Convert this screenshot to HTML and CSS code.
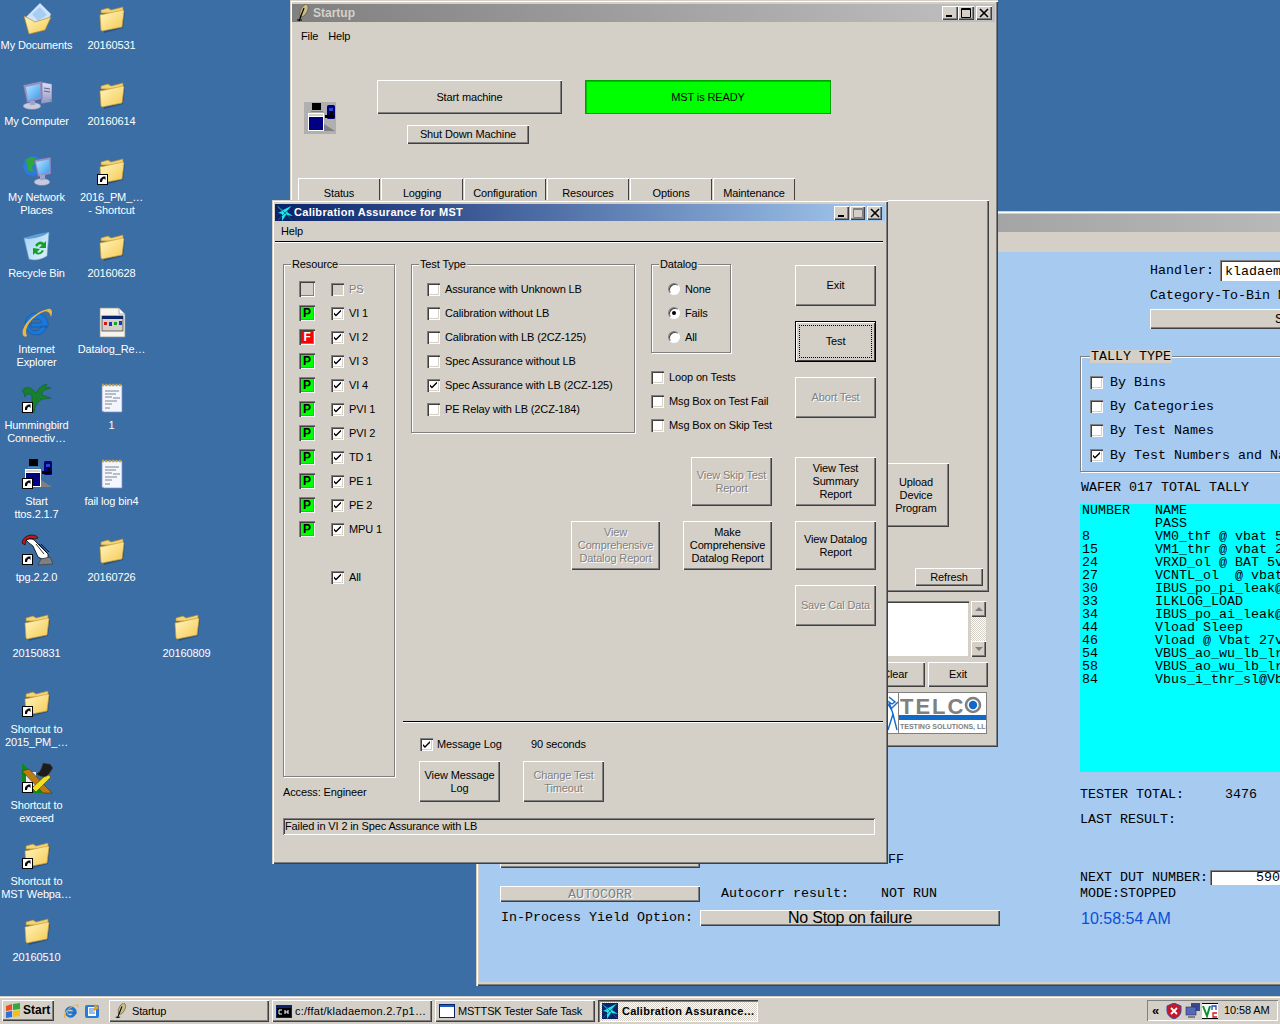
FILE: index.html
```html
<!DOCTYPE html>
<html lang="en">
<head>
<meta charset="utf-8">
<title>Desktop</title>
<link rel="stylesheet" href="styles.css">
</head>
<body>
<svg class="defs" width="0" height="0" aria-hidden="true">
  <defs>
    <linearGradient id="gFold" x1="0" y1="0" x2="1" y2="1"><stop offset="0" stop-color="#fff6c0"/><stop offset="1" stop-color="#f6c850"/></linearGradient>
    <linearGradient id="gScreen" x1="0" y1="0" x2="1" y2="1"><stop offset="0" stop-color="#b8e4ff"/><stop offset="1" stop-color="#3c9cf0"/></linearGradient>
    <linearGradient id="gCase" x1="0" y1="0" x2="0" y2="1"><stop offset="0" stop-color="#dfe2f4"/><stop offset="1" stop-color="#8f94c4"/></linearGradient>
    <linearGradient id="gBin" x1="0" y1="0" x2="1" y2="1"><stop offset="0" stop-color="#9ed2f4"/><stop offset="1" stop-color="#e2f2fc"/></linearGradient>
    <symbol id="i-folder" viewBox="0 0 32 32">
      <g transform="translate(-1 0)">
      <path d="M7 13 L29 8 L30 10 L28 26 L9 31 Z" fill="#1d3d66" opacity=".55"/>
      <path d="M6 11 L6 8 L13 6 L16 8 L28 5 L28 11 Z" fill="#f4d478" stroke="#b08c34" stroke-width=".7"/>
      <path d="M5 13 L28 8 L29 9 L27 25 L7 29 L6 28 Z" fill="url(#gFold)" stroke="#c49e3c" stroke-width=".7"/>
      </g>
    </symbol>
    <symbol id="i-short" viewBox="0 0 32 32">
      <rect x="1.5" y="20.5" width="10" height="10" fill="#fff" stroke="#000"/>
      <path d="M4 28 V26 Q4 24 6 24 H5 L7.5 22.5 L9.5 22.5 V26 L8 24.5 Q6 25 6 28 Z" fill="#000"/>
    </symbol>
    <symbol id="i-docs" viewBox="0 0 32 32">
      <path d="M5 15 L19 1 L30 12 L26 22 L14 26 Z" fill="#cfe4fa" stroke="#7a9cc8" stroke-width=".6"/>
      <path d="M11 12 L19 5 L26 13 L17 19 Z" fill="#a8cdf2"/>
      <path d="M3 14 L14 20 L30 15 L24 28 L8 32 Z" fill="url(#gFold)" stroke="#b8902c" stroke-width=".7"/>
    </symbol>
    <symbol id="i-comp" viewBox="0 0 32 32">
      <path d="M20 4 L31 6 V24 L20 26 Z" fill="url(#gCase)" stroke="#5c6298" stroke-width=".6"/>
      <path d="M23 10 L29 11 M23 13 L29 14" stroke="#5c6298"/>
      <circle cx="29" cy="22" r=".8" fill="#20d020"/>
      <path d="M2 7 L21 3 V21 L6 25 Z" fill="#8f94c4" stroke="#5c6298" stroke-width=".6"/>
      <path d="M5 9 L19 6 V19 L7 22 Z" fill="url(#gScreen)"/>
      <ellipse cx="11" cy="28" rx="9" ry="3.5" fill="#c8cae0" stroke="#70749c" stroke-width=".5"/>
      <rect x="9" y="23" width="5" height="4" fill="#a0a4c8"/>
    </symbol>
    <symbol id="i-net" viewBox="0 0 32 32">
      <circle cx="12" cy="12" r="10" fill="#2e7ad8"/>
      <path d="M5 6 Q9 2 14 4 L16 9 L11 12 L12 18 L7 16 Z" fill="#2ea838"/>
      <path d="M13 6 L30 3 V20 L17 23 Z" fill="#8f94c4" stroke="#5c6298" stroke-width=".6"/>
      <path d="M15 8 L28 5.5 V18 L18 20.5 Z" fill="url(#gScreen)"/>
      <ellipse cx="21" cy="28" rx="8" ry="3.5" fill="#c8cae0" stroke="#70749c" stroke-width=".5"/>
      <rect x="19" y="21" width="5" height="5" fill="#a0a4c8"/>
    </symbol>
    <symbol id="i-bin" viewBox="0 0 32 32">
      <path d="M3 8 Q14 10 28 2 L26 26 Q16 32 8 29 Z" fill="url(#gBin)" stroke="#6ea4cc" stroke-width=".6"/>
      <path d="M3 8 Q14 4 28 2 Q20 9 3 8 Z" fill="#5ea0d4"/>
      <path d="M14 15 Q19 9 23 13 L25 11 V18 L18 18 L21 15 Q18 13 16 17 Z M23 21 Q18 27 14 23 L12 25 V18 L19 19 L16 22 Q19 24 21 20 Z" fill="#14a028"/>
    </symbol>
    <symbol id="i-ie" viewBox="0 0 32 32">
      <path d="M15 7 A11 11 0 1 0 26 20 H20 A6 6 0 1 1 15 13 A6 6 0 0 1 21 17 H10 V21 H27 A12 12 0 0 0 15 7 Z" fill="#1c78d8" stroke="#0c4c9c" stroke-width=".5"/>
      <path d="M2 29 C-1 22 12 6 27 3 C31 2 32 6 30 11 C29 6 26 4 22 6 C11 11 2 22 6 30 C5 31 3 31 2 29 Z" fill="#eeb63c"/>
    </symbol>
    <symbol id="i-page" viewBox="0 0 32 32">
      <path d="M4 2 H23 L29 8 V31 H4 Z" fill="#f6f4ec" stroke="#8c8c8c" stroke-width=".7"/>
      <path d="M23 2 V8 H29 Z" fill="#fff" stroke="#8c8c8c" stroke-width=".7"/>
      <rect x="6" y="10" width="21" height="15" fill="#d4d0c8" stroke="#333" stroke-width=".7"/>
      <rect x="6" y="10" width="21" height="3" fill="#0a246a"/>
      <rect x="8" y="16" width="3" height="3" fill="#d01818"/><rect x="13" y="16" width="3" height="4" fill="#1838c8"/><rect x="18" y="16" width="3" height="3" fill="#18a030"/><rect x="23" y="15" width="3" height="4" fill="#1838c8"/>
    </symbol>
    <symbol id="i-note" viewBox="0 0 32 32">
      <path d="M6 3 H26 V30 H8 L6 29 Z" fill="#f2f6ff" stroke="#8a90c0" stroke-width=".7"/>
      <path d="M6 3 H26" stroke="#c0a040" stroke-width="2.5" stroke-dasharray="2 1.4"/>
      <path d="M9 9 H23 M9 12 H20 M9 15 H16 M17 16 H24 M9 19 H21 M9 22 H16 M9 26 H14" stroke="#808488" stroke-width="1"/>
    </symbol>
    <symbol id="i-bird" viewBox="0 0 32 32">
      <path d="M1 9 Q4 4 9 6 Q13 8 15 11 Q19 3 26 2 L24 5 L30 6 L24 8 Q20 10 21 13 L30 16 L22 17 Q16 19 14 26 L13 31 Q10 22 11 14 Q7 9 4 15 L3 11 Z" fill="#18802c" stroke="#0e5a1e" stroke-width=".5"/>
    </symbol>
    <symbol id="i-ttos" viewBox="0 0 32 32">
      <rect x="8" y="1" width="9" height="7" fill="#000"/><path d="M7 9 H19 V10 H7 Z" fill="#808080"/>
      <rect x="4" y="11" width="16" height="18" fill="#fff"/><rect x="5" y="15" width="14" height="13" fill="#000080"/><rect x="5" y="12" width="14" height="2" fill="#d4d0c8"/>
      <path d="M20 29 V22 L31 29 Z" fill="#808080"/>
      <rect x="23" y="3" width="8" height="14" rx="1.5" fill="#000080"/><rect x="25" y="6" width="4" height="3" fill="#2848c8"/><rect x="26" y="9" width="3" height="5" fill="#000"/><rect x="21" y="13" width="10" height="3" fill="#000"/>
    </symbol>
    <symbol id="i-tpg" viewBox="0 0 32 32">
      <path d="M1 9 Q2 2 10 1 Q16 1 17 4 L14 5 Q10 3 5 6 L4 11 Z" fill="#c01818" stroke="#000" stroke-width=".6"/>
      <path d="M5 6 Q12 3 15 8 L27 20 L27 24 L21 25 L17 23 L12 12 L8 9 Z" fill="#fff" stroke="#000" stroke-width=".8"/>
      <path d="M15 10 L23 20 M18 10 L26 19 M20 10 L28 18" stroke="#000" stroke-width=".8"/>
      <path d="M17 31 L20 25 L29 23 L32 30 Z" fill="#808080" stroke="#333" stroke-width=".6"/>
    </symbol>
    <symbol id="i-exc" viewBox="0 0 32 32">
      <path d="M1 1 L1 31 H31 Z" fill="#0b8a1e"/>
      <path d="M5 10 H15 V24 H5 Z" fill="#e8e8f0"/>
      <path d="M1 9 L8 7 L31 31 H22 Z" fill="#b87c14" stroke="#3a2a04" stroke-width=".5"/>
      <path d="M11 26 L26 12 L30 15 L15 30 Z" fill="#f0e020" stroke="#3a2a04" stroke-width=".5"/>
      <path d="M15 12 Q19 10 20 7 L22 1 L29 2 L32 6 L28 12 Q24 18 15 12 Z" fill="#1c1c1c" stroke="#555" stroke-width=".5"/>
    </symbol>
    <symbol id="i-cal" viewBox="0 0 16 16">
      <rect width="16" height="16" fill="#0a246a"/>
      <path d="M0 1 L6 5 L14 1 L10 7 L16 11 L9 10 L5 16 L5 9 L1 8 L5 6 Z" fill="#22e0e8"/>
      <path d="M1 15 L15 1 M1 1 L15 15" stroke="#0a6a7a" stroke-width=".8"/>
    </symbol>
    <symbol id="i-feather" viewBox="0 0 16 18">
      <path d="M11 0 Q15 2 12 8 Q10 12 7 13 L5 12 Q4 7 7 3 Q9 1 11 0 Z" fill="#c8bc88" stroke="#5a5030" stroke-width=".7"/>
      <path d="M9 4 L4 17" stroke="#000" stroke-width="1.2"/>
      <path d="M2 16 H7" stroke="#000"/>
    </symbol>
    <symbol id="i-min" viewBox="0 0 16 14"><rect x="4" y="9" width="6" height="2" fill="#000"/></symbol>
    <symbol id="i-max" viewBox="0 0 16 14"><path d="M3.5 2.5 H12.5 V11.5 H3.5 Z M3.5 3.5 H12.5" fill="none" stroke="currentColor"/></symbol>
    <symbol id="i-close" viewBox="0 0 16 14"><path d="M4 3 L12 11 M12 3 L4 11" stroke="#000" stroke-width="1.6"/></symbol>
  </defs>
</svg>

<main class="desktop">
  <section class="icons">
    <div class="dicon"><svg class="ico"><use href="#i-docs"/></svg><span>My Documents</span></div>
    <div class="dicon"><svg class="ico"><use href="#i-comp"/></svg><span>My Computer</span></div>
    <div class="dicon"><svg class="ico"><use href="#i-net"/></svg><span>My Network<br>Places</span></div>
    <div class="dicon"><svg class="ico"><use href="#i-bin"/></svg><span>Recycle Bin</span></div>
    <div class="dicon"><svg class="ico"><use href="#i-ie"/></svg><span>Internet<br>Explorer</span></div>
    <div class="dicon"><svg class="ico"><use href="#i-bird"/><use href="#i-short"/></svg><span>Hummingbird<br>Connectiv…</span></div>
    <div class="dicon"><svg class="ico"><use href="#i-ttos"/><use href="#i-short"/></svg><span>Start<br>ttos.2.1.7</span></div>
    <div class="dicon"><svg class="ico"><use href="#i-tpg"/><use href="#i-short"/></svg><span>tpg.2.2.0</span></div>
    <div class="dicon"><svg class="ico"><use href="#i-folder"/></svg><span>20150831</span></div>
    <div class="dicon"><svg class="ico"><use href="#i-folder"/><use href="#i-short"/></svg><span>Shortcut to<br>2015_PM_…</span></div>
    <div class="dicon"><svg class="ico"><use href="#i-exc"/><use href="#i-short"/></svg><span>Shortcut to<br>exceed</span></div>
    <div class="dicon"><svg class="ico"><use href="#i-folder"/><use href="#i-short"/></svg><span>Shortcut to<br>MST Webpa…</span></div>
    <div class="dicon"><svg class="ico"><use href="#i-folder"/></svg><span>20160510</span></div>

    <div class="dicon"><svg class="ico"><use href="#i-folder"/></svg><span>20160531</span></div>
    <div class="dicon"><svg class="ico"><use href="#i-folder"/></svg><span>20160614</span></div>
    <div class="dicon"><svg class="ico"><use href="#i-folder"/><use href="#i-short"/></svg><span>2016_PM_…<br>- Shortcut</span></div>
    <div class="dicon"><svg class="ico"><use href="#i-folder"/></svg><span>20160628</span></div>
    <div class="dicon"><svg class="ico"><use href="#i-page"/></svg><span>Datalog_Re…</span></div>
    <div class="dicon"><svg class="ico"><use href="#i-note"/></svg><span>1</span></div>
    <div class="dicon"><svg class="ico"><use href="#i-note"/></svg><span>fail log bin4</span></div>
    <div class="dicon"><svg class="ico"><use href="#i-folder"/></svg><span>20160726</span></div>
    <div class="dicon col3"><svg class="ico"><use href="#i-folder"/></svg><span>20160809</span></div>
  </section>

  <!-- MSTTSK Tester Safe Task window -->
  <section class="win mst">
    <header class="title inactive mst-title"></header>
    <div class="mst-menu"></div>
    <div class="mst-body mono">
      <div class="mst-left">
        <div class="mst-row r1"><span class="tkbtn wide"></span><span class="ff">FF</span></div>
        <div class="mst-row r2"><span class="tkbtn wide dis">AUTOCORR</span><span class="ac-l">Autocorr result:</span><span class="ac-v">NOT RUN</span></div>
        <div class="mst-row r3"><span class="yl">In-Process Yield Option:</span><span class="tkbtn yield">No Stop on failure</span></div>
      </div>
      <div class="mst-right">
        <div class="handler"><span>Handler:</span><span class="entry">kladaemon.2.7</span></div>
        <div class="catbin">Category-To-Bin Map</div>
        <div class="tkbtn catbtn">Select</div>
        <div class="group tally">
          <span class="legend">TALLY TYPE</span>
          <div class="tally-row"><span class="cb"></span>By Bins</div>
          <div class="tally-row"><span class="cb"></span>By Categories</div>
          <div class="tally-row"><span class="cb"></span>By Test Names</div>
          <div class="tally-row"><span class="cb on"></span>By Test Numbers and Names</div>
        </div>
        <div class="wafer">WAFER 017 TOTAL TALLY</div>
        <div class="cyan">
          <span>NUMBER</span><span>NAME</span>
          <span></span><span>PASS</span>
          <span>8</span><span>VM0_thf @ vbat 5v</span>
          <span>15</span><span>VM1_thr @ vbat 27v</span>
          <span>24</span><span>VRXD_ol @ BAT 5v</span>
          <span>27</span><span>VCNTL_ol  @ vbat 5v</span>
          <span>30</span><span>IBUS_po_pi_leak@</span>
          <span>33</span><span>ILKLOG_LOAD</span>
          <span>34</span><span>IBUS_po_ai_leak@</span>
          <span>44</span><span>Vload Sleep</span>
          <span>46</span><span>Vload @ Vbat 27v</span>
          <span>54</span><span>VBUS_ao_wu_lb_lr</span>
          <span>58</span><span>VBUS_ao_wu_lb_lr</span>
          <span>84</span><span>Vbus_i_thr_sl@Vbat</span>
        </div>
        <div class="tester"><span>TESTER TOTAL:</span><span>3476</span></div>
        <div class="last">LAST RESULT:</div>
        <div class="next"><span>NEXT DUT NUMBER:</span><span class="entry dut">590</span></div>
        <div class="mode">MODE:STOPPED</div>
        <div class="clock">10:58:54 AM</div>
      </div>
    </div>
  </section>

  <!-- Startup window -->
  <section class="win startup">
    <header class="title inactive st-title">
      <svg class="tico"><use href="#i-feather"/></svg><span class="ttext">Startup</span>
      <span class="wbtns"><span class="wb"><svg><use href="#i-min"/></svg></span><span class="wb"><svg><use href="#i-max"/></svg></span><span class="wb gap"><svg><use href="#i-close"/></svg></span></span>
    </header>
    <nav class="st-menu"><span>File</span><span>Help</span></nav>
    <div class="st-top">
      <svg class="st-ico"><use href="#i-ttos"/></svg>
      <div class="st-btns">
        <div class="tkbtn start">Start machine</div>
        <div class="tkbtn shut">Shut Down Machine</div>
      </div>
      <div class="ready">MST is READY</div>
    </div>
    <div class="tabs">
      <span class="tab">Status</span><span class="tab">Logging</span><span class="tab">Configuration</span><span class="tab">Resources</span><span class="tab">Options</span><span class="tab">Maintenance</span>
    </div>
    <div class="panel">
      <div class="tkbtn upload">Upload<br>Device<br>Program</div>
      <div class="tkbtn refresh">Refresh</div>
    </div>
    <div class="logrow">
      <div class="logbox"></div>
      <div class="sbar"><span class="sarrow up"></span><span class="strack"></span><span class="sarrow down"></span></div>
    </div>
    <div class="st-bottom">
      <div class="tkbtn clear">Clear</div>
      <div class="tkbtn st-exit">Exit</div>
    </div>
    <div class="logo-row">
      <svg class="logo" viewBox="0 0 130 42" role="img" aria-label="Telco Testing Solutions">
        <rect x=".5" y=".5" width="129" height="41" fill="#fff" stroke="#808080"/>
        <path d="M32 5 L38 10 L35 12 L32 10 L36 22 L40 38 M36 22 L31 38 M29 9 L34 17 L41 10" fill="none" stroke="#1068c8" stroke-width="1.4"/>
        <line x1="41.5" y1="1" x2="41.5" y2="41" stroke="#808080"/>
        <text x="43" y="22" class="logo-t">TELC</text>
        <circle cx="116" cy="13" r="7" fill="#fff" stroke="#808080" stroke-width="2.6"/>
        <circle cx="116" cy="13" r="4.2" fill="#1068c8"/>
        <rect x="42" y="23" width="87" height="5" fill="#1068c8"/>
        <text x="43" y="37" class="logo-s">TESTING SOLUTIONS, LLC</text>
      </svg>
    </div>
  </section>

  <!-- Calibration dialog -->
  <section class="win cal">
    <header class="title active cal-title">
      <svg class="cico"><use href="#i-cal"/></svg><span class="ttext">Calibration Assurance for MST</span>
      <span class="wbtns"><span class="wb s"><svg><use href="#i-min"/></svg></span><span class="wb s dim"><svg><use href="#i-max"/></svg></span><span class="wb s gap"><svg><use href="#i-close"/></svg></span></span>
    </header>
    <nav class="cal-menu"><span>Help</span></nav>
    <div class="rule"></div>
    <div class="cal-body">
      <div class="cal-main">
        <div class="cal-left">
          <div class="group resource">
            <span class="legend">Resource</span>
            <div class="res-row"><span class="led"></span><span class="cb off"></span><span class="lbl dis">PS</span></div>
            <div class="res-row"><span class="led p">P</span><span class="cb on"></span><span class="lbl">VI 1</span></div>
            <div class="res-row"><span class="led f">F</span><span class="cb on"></span><span class="lbl">VI 2</span></div>
            <div class="res-row"><span class="led p">P</span><span class="cb on"></span><span class="lbl">VI 3</span></div>
            <div class="res-row"><span class="led p">P</span><span class="cb on"></span><span class="lbl">VI 4</span></div>
            <div class="res-row"><span class="led p">P</span><span class="cb on"></span><span class="lbl">PVI 1</span></div>
            <div class="res-row"><span class="led p">P</span><span class="cb on"></span><span class="lbl">PVI 2</span></div>
            <div class="res-row"><span class="led p">P</span><span class="cb on"></span><span class="lbl">TD 1</span></div>
            <div class="res-row"><span class="led p">P</span><span class="cb on"></span><span class="lbl">PE 1</span></div>
            <div class="res-row"><span class="led p">P</span><span class="cb on"></span><span class="lbl">PE 2</span></div>
            <div class="res-row"><span class="led p">P</span><span class="cb on"></span><span class="lbl">MPU 1</span></div>
            <div class="res-row all"><span class="led none"></span><span class="cb on"></span><span class="lbl">All</span></div>
          </div>
          <div class="access">Access: Engineer</div>
        </div>
        <div class="cal-right">
          <div class="row-a">
            <div class="group testtype">
              <span class="legend">Test Type</span>
              <div class="opt"><span class="cb"></span>Assurance with Unknown LB</div>
              <div class="opt"><span class="cb"></span>Calibration without LB</div>
              <div class="opt"><span class="cb"></span>Calibration with LB (2CZ-125)</div>
              <div class="opt"><span class="cb"></span>Spec Assurance without LB</div>
              <div class="opt"><span class="cb on"></span>Spec Assurance with LB (2CZ-125)</div>
              <div class="opt"><span class="cb"></span>PE Relay with LB (2CZ-184)</div>
            </div>
            <div class="dl-col">
              <div class="group datalog">
                <span class="legend">Datalog</span>
                <div class="opt r"><span class="radio"></span>None</div>
                <div class="opt r"><span class="radio on"></span>Fails</div>
                <div class="opt r"><span class="radio"></span>All</div>
              </div>
              <div class="dl-checks">
                <div class="opt"><span class="cb"></span>Loop on Tests</div>
                <div class="opt"><span class="cb"></span>Msg Box on Test Fail</div>
                <div class="opt"><span class="cb"></span>Msg Box on Skip Test</div>
              </div>
            </div>
            <div class="btn-col">
              <div class="tkbtn b41">Exit</div>
              <div class="tkbtn b41 default">Test</div>
              <div class="tkbtn b41 dis">Abort Test</div>
            </div>
          </div>
          <div class="row-btn">
            <div class="tkbtn b49 dis">View Skip Test<br>Report</div>
            <div class="tkbtn b49">View Test<br>Summary<br>Report</div>
          </div>
          <div class="row-btn">
            <div class="tkbtn b49 w89 dis">View<br>Comprehensive<br>Datalog Report</div>
            <div class="tkbtn b49 w89">Make<br>Comprehensive<br>Datalog Report</div>
            <div class="tkbtn b49">View Datalog<br>Report</div>
          </div>
          <div class="row-btn">
            <div class="tkbtn b41 dis">Save Cal Data</div>
          </div>
          <div class="sep"></div>
          <div class="msg-row">
            <span class="opt msglog"><span class="cb on"></span>Message Log</span>
            <span>90 seconds</span>
          </div>
          <div class="msg-btns">
            <div class="tkbtn b41">View Message<br>Log</div>
            <div class="tkbtn b41 dis">Change Test<br>Timeout</div>
          </div>
        </div>
      </div>
      <div class="status">Failed in VI 2 in Spec Assurance with LB</div>
    </div>
  </section>
</main>

<footer class="taskbar">
  <div class="startbtn">
    <svg class="flag" viewBox="0 0 16 16"><path d="M1 3 L7 1 V7 L1 8 Z" fill="#e8501c"/><path d="M8 1 L15 0 V6 L8 7 Z" fill="#34a838"/><path d="M1 9 L7 8 V14 L1 15 Z" fill="#2c70d8"/><path d="M8 8 L15 7 V13 L8 14 Z" fill="#f4c018"/></svg>
    <b>Start</b>
  </div>
  <div class="quick">
    <svg class="q"><use href="#i-ie"/></svg>
    <svg class="q2" viewBox="0 0 16 16"><rect x="1" y="2" width="14" height="13" rx="2" fill="#2c7ad8"/><rect x="4" y="4" width="8" height="9" fill="#fff"/><path d="M5 6 H11 M5 8 H9 M5 10 H11" stroke="#2c7ad8"/><path d="M11 1 L15 5 L9 9 Z" fill="#e8a020"/></svg>
  </div>
  <div class="tasks">
    <div class="task"><svg class="tsk-i" viewBox="0 0 16 18"><use href="#i-feather"/></svg>Startup</div>
    <div class="task cmd"><svg class="tsk-i" viewBox="0 0 16 16"><rect y="2" width="16" height="13" fill="#0a246a"/><rect x="1" y="5" width="14" height="9" fill="#000"/><path d="M3 7 H6 M3 7 V11 H6 M9 7 V11 M12 7 V11 M9 9 H12" stroke="#fff"/></svg>c:/ffat/kladaemon.2.7p1…</div>
    <div class="task"><svg class="tsk-i" viewBox="0 0 16 16"><rect x=".5" y="1.5" width="15" height="13" fill="#fff" stroke="#0a246a"/><rect x="1" y="2" width="14" height="2" fill="#1c5cc8"/></svg>MSTTSK Tester Safe Task</div>
    <div class="task pressed"><svg class="tsk-i"><use href="#i-cal"/></svg>Calibration Assurance…</div>
  </div>
  <div class="tray">
    <span class="chev">«</span>
    <svg class="tr" viewBox="0 0 16 16"><path d="M8 0 L15 3 V8 Q15 13 8 16 Q1 13 1 8 V3 Z" fill="#c81828" stroke="#3848a8"/><path d="M5 5 L11 11 M11 5 L5 11" stroke="#fff" stroke-width="1.8"/></svg>
    <svg class="tr" viewBox="0 0 16 16"><rect x="7" y="0" width="9" height="8" fill="#384890"/><rect x="2" y="4" width="10" height="8" fill="#5868b8" stroke="#202860" stroke-width=".6"/><rect x="4" y="13" width="7" height="2" fill="#808080"/></svg>
    <svg class="tr" viewBox="0 0 16 16"><rect width="16" height="16" fill="#fff"/><rect width="16" height="1" fill="#000"/><rect y="15" width="16" height="1" fill="#000"/><path d="M1 3 L5 13 L8 3" fill="none" stroke="#109030" stroke-width="2"/><path d="M10 7 V3 H14 V7" fill="none" stroke="#2048d0" stroke-width="1.3"/><path d="M15 10 H11 V14 H15" fill="none" stroke="#d01818" stroke-width="1.3"/></svg>
    <span class="time">10:58 AM</span>
  </div>
</footer>
</body>
</html>
```

FILE: styles.css
```css
* { box-sizing: border-box; }
html, body { margin: 0; height: 100%; }
body {
  width: 1280px; height: 1024px; overflow: hidden;
  display: flex; flex-direction: column;
  background: #3a6ea5; color: #000;
  font: 11px/13px "Liberation Sans", Arial, sans-serif;
  letter-spacing: -.13px;
}
.defs { position: absolute; }
.desktop { position: relative; height: 996px; flex: none; overflow: hidden; }

/* desktop icons */
.icons {
  display: grid; grid-auto-flow: column;
  grid-template-columns: repeat(3, 75px);
  grid-template-rows: repeat(13, 76px);
  margin-left: -1px; padding-top: 2px;
}
.dicon { display: flex; flex-direction: column; align-items: center; color: #fff; text-align: center; white-space: nowrap; }
.dicon span { margin-top: 5px; }
.ico { width: 32px; height: 32px; display: block; }
.col3 { grid-column: 3; grid-row: 9; }

/* windows */
.win { position: absolute; background: #d4d0c8; box-shadow: inset 1px 1px #d4d0c8, inset 2px 2px #fff, inset -1px -1px #404040, inset -2px -2px #808080; }
.title { display: flex; align-items: center; color: #d4d0c8; font-weight: bold; letter-spacing: .3px; }
.inactive { background: linear-gradient(90deg, #808080, #c0c0c0); }
.active { background: linear-gradient(90deg, #0a246a, #a6caf0); color: #fff; }
.ttext { white-space: nowrap; }
.wbtns { margin-left: auto; display: flex; }
.wb { width: 16px; height: 14px; display: block; background: #d4d0c8; color: #000; box-shadow: inset 1px 1px #fff, inset -1px -1px #404040, inset -2px -2px #808080; }
.wb svg { width: 16px; height: 14px; display: block; }
.wb.gap { margin-left: 2px; }
.wb.s { width: 15px; margin-left: 1px; }
.wb.s.gap { margin-left: 2px; }
.wb.dim { color: #808080; }

/* tk style buttons */
.tkbtn {
  display: flex; align-items: center; justify-content: center; text-align: center; flex: none;
  background: #d4d0c8; line-height: 13px;
  box-shadow: inset 1px 1px #fff, inset -1px -1px #404040, inset -2px -2px #808080;
}
.tkbtn.dis, .lbl.dis { color: #808080; text-shadow: 1px 1px #fff; }
.b41 { width: 81px; height: 41px; }
.b49 { width: 81px; height: 49px; }
.w89 { width: 89px; }
.default { position: relative; box-shadow: inset 0 0 0 1px #000, inset 2px 2px #fff, inset -2px -2px #404040; }
.default::after { content: ""; position: absolute; inset: 4px; border: 1px dotted #000; }

/* check/radio */
.cb { display: block; position: relative; width: 13px; height: 13px; flex: none; background: #fff; box-shadow: inset 1px 1px #808080, inset 2px 2px #404040, inset -1px -1px #fff, inset -2px -2px #d4d0c8; }
.cb.on::after { content: ""; position: absolute; inset: 2px; background: #000; clip-path: polygon(11% 44%, 33% 66%, 89% 11%, 89% 33%, 33% 89%, 11% 66%); }
.cb.off { background: #d4d0c8; }
.radio { display: block; position: relative; width: 12px; height: 12px; flex: none; border-radius: 50%; background: #fff; border: 1px solid; border-color: #808080 #fff #fff #808080; box-shadow: inset 1px 1px #404040; }
.radio.on::after { content: ""; position: absolute; left: 3px; top: 3px; width: 4px; height: 4px; border-radius: 50%; background: #000; }

/* group box */
.group { position: relative; border: 1px solid #808080; box-shadow: inset 1px 1px #fff, 1px 1px #fff; }
.legend { position: absolute; top: -7px; left: 7px; padding: 0 1px; background: #d4d0c8; white-space: nowrap; }
.opt { display: flex; align-items: center; gap: 5px; height: 24px; white-space: nowrap; }

/* Startup */
.startup { left: 290px; top: 0; width: 708px; height: 747px; padding: 4px 3px 0 2px; z-index: 2; }
.st-title { height: 18px; padding: 0 3px 0 2px; font-size: 12px; letter-spacing: 0; }
.tico { width: 16px; height: 18px; flex: none; margin: 0 2px 0 1px; }
.st-menu { display: flex; gap: 10px; height: 28px; padding-left: 9px; align-items: center; }
.st-top { display: flex; margin-top: 30px; padding-left: 12px; }
.st-ico { width: 32px; height: 32px; margin-top: 22px; background: #b0b0b0; flex: none; }
.st-btns { margin-left: 41px; width: 185px; }
.start { width: 185px; height: 34px; }
.shut { width: 122px; height: 19px; margin: 11px 0 0 30px; }
.ready { margin-left: 23px; width: 246px; height: 34px; display: flex; align-items: center; justify-content: center; background: #00ff00; box-shadow: inset 1px 1px #00a000, inset -1px -1px #00a000, inset 2px 2px #00c000; }
.tabs { display: flex; gap: 1px; margin: 34px 0 0 6px; height: 22px; }
.tab { width: 82px; height: 30px; padding-top: 9px; text-align: center; background: #d4d0c8; box-shadow: inset 1px 1px #fff, inset -1px 0 #404040; }
.panel { position: relative; display: flex; flex-direction: column; align-items: flex-end; margin-left: 6px; width: 691px; height: 392px; background: #d4d0c8; padding-top: 263px; box-shadow: inset 1px 1px #fff, inset -1px -1px #404040, inset -2px -2px #808080; }
.upload { width: 66px; height: 64px; margin-right: 40px; }
.refresh { width: 68px; height: 18px; margin: 41px 6px 0 0; }
.logrow { display: flex; justify-content: flex-end; gap: 2px; margin: 9px 9px 0 0; height: 56px; }
.logbox { width: 300px; background: #fff; box-shadow: inset 1px 1px #808080, inset 2px 2px #404040, inset -1px -1px #d4d0c8; }
.sbar { width: 15px; display: flex; flex-direction: column; }
.sarrow { height: 16px; flex: none; position: relative; background: #d4d0c8; box-shadow: inset 1px 1px #fff, inset -1px -1px #404040, inset -2px -2px #808080; }
.sarrow::after { content: ""; position: absolute; left: 4px; top: 6px; border: 4px solid transparent; border-top: 0; border-bottom: 4px solid #808080; }
.sarrow.down::after { border-bottom: 0; border-top: 4px solid #808080; }
.strack { flex: 1; background: repeating-conic-gradient(#fff 0 25%, #d4d0c8 0 50%) 0 0 / 2px 2px; }
.st-bottom { display: flex; justify-content: flex-end; gap: 3px; margin: 5px 7px 0 0; }
.clear { width: 60px; height: 25px; }
.st-exit { width: 60px; height: 25px; }
.logo-row { display: flex; justify-content: flex-end; margin: 5px 8px 0 0; }
.logo { width: 130px; height: 42px; display: block; }
.logo-t { font: bold 22px "Liberation Sans", sans-serif; letter-spacing: 2px; fill: #808080; }
.logo-s { font: bold 7px "Liberation Sans", sans-serif; letter-spacing: 0; fill: #808080; }

/* Calibration dialog */
.cal { left: 272px; top: 200px; width: 616px; height: 664px; padding: 4px 3px 0; z-index: 3; }
.cal-title { height: 17px; padding-right: 3px; }
.cico { width: 16px; height: 16px; flex: none; margin: 0 1px 0 2px; }
.cal-menu { height: 20px; padding-left: 6px; display: flex; align-items: center; }
.rule { height: 2px; width: 608px; border-top: 1px solid #000; border-bottom: 1px solid #fff; }
.cal-body { padding: 21px 0 0 8px; }
.cal-main { display: flex; }
.cal-left { width: 112px; flex: none; }
.resource { height: 513px; padding: 12px 0 0 15px; }
.res-row { display: flex; align-items: center; height: 24px; white-space: nowrap; }
.res-row.all { margin-top: 24px; }
.led { width: 16px; height: 16px; flex: none; margin-right: 16px; display: flex; align-items: center; justify-content: center; font-weight: bold; font-size: 12px; box-shadow: inset 1px 1px #808080, inset 2px 2px #404040, inset -1px -1px #fff, inset -2px -2px #808080; }
.led.p { background: #00ff00; color: #000; }
.led.f { background: #ff0000; color: #fff; }
.led.none { visibility: hidden; }
.lbl { margin-left: 5px; }
.access { margin-top: 9px; }
.cal-right { margin-left: 8px; width: 480px; flex: none; }
.row-a { display: flex; padding-left: 8px; height: 169px; }
.testtype { width: 224px; height: 169px; padding: 12px 0 0 15px; flex: none; }
.dl-col { width: 128px; margin-left: 16px; flex: none; white-space: nowrap; }
.datalog { width: 80px; height: 89px; padding: 12px 0 0 16px; }
.dl-checks { margin-top: 12px; }
.btn-col { margin-left: 16px; padding-top: 1px; display: flex; flex-direction: column; gap: 15px; }
.row-btn { display: flex; justify-content: flex-end; gap: 23px; padding-right: 7px; margin-top: 15px; }
.row-a + .row-btn { margin-top: 24px; }
.sep { margin-top: 95px; height: 2px; border-top: 1px solid #000; border-bottom: 1px solid #fff; }
.msg-row { display: flex; align-items: center; height: 13px; margin-top: 15px; padding-left: 17px; }
.msglog { width: 111px; height: 13px; gap: 4px; }
.msg-btns { display: flex; gap: 23px; margin-top: 10px; padding-left: 16px; }
.status { margin-top: 16px; width: 592px; height: 17px; padding: 1px 2px; line-height: 14px; box-shadow: inset 1px 1px #808080, inset -1px -1px #fff, inset 2px 2px #404040, inset -2px -2px #d4d0c8; white-space: nowrap; }

/* MSTTSK */
.mst { left: 476px; top: 211px; width: 920px; height: 775px; padding: 3px 0 0 3px; }
.mst-title { height: 18px; }
.mst-menu { height: 20px; }
.mst-body { display: flex; height: 730px; background: #a6caf0; }
.mono { font: 13.33px/13px "Liberation Mono", "Courier New", monospace; letter-spacing: 0; }
.mst-left { width: 601px; flex: none; display: flex; flex-direction: column; justify-content: flex-end; padding: 0 0 56px 21px; white-space: nowrap; }
.mst-row { display: flex; align-items: center; }
.r1 { height: 18px; }
.wide { width: 200px; height: 100%; }
.ff { margin-left: 188px; }
.r2 { height: 16px; margin-top: 18px; }
.ac-l { margin-left: 21px; width: 160px; padding-bottom: 1px; }
.ac-v { padding-bottom: 1px; }
.r3 { height: 16px; margin-top: 8px; }
.yl { margin-left: 1px; width: 199px; padding-bottom: 2px; }
.yield { width: 300px; height: 16px; font: 16px/16px "Liberation Sans", sans-serif; letter-spacing: -.22px; }
.mst-right { flex: 1; white-space: nowrap; padding-top: 8px; }
.handler { display: flex; align-items: center; padding-left: 70px; gap: 6px; height: 21px; }
.entry { display: block; background: #fff; box-shadow: inset 1px 1px #808080, inset 2px 2px #404040, inset -1px -1px #fff; }
.handler .entry { width: 120px; height: 21px; padding: 5px 0 0 5px; }
.catbin { padding-left: 70px; margin-top: 8px; }
.catbtn { margin: 7px 0 0 70px; width: 298px; height: 20px; }
.tally { margin-top: 27px; height: 116px; padding: 13px 0 0 9px; }
.tally .legend { left: 9px; }
.tally-row { display: flex; align-items: center; gap: 7px; height: 24.4px; }
.wafer { margin: 9px 0 0 1px; }
.cyan { margin-top: 10px; height: 268px; background: #00ffff; display: grid; grid-template-columns: 73px 1fr; grid-auto-rows: 13px; padding-left: 2px; }
.cyan span { white-space: pre; }
.tester { display: flex; margin-top: 16px; gap: 41px; }
.tester span:first-child { width: 104px; }
.last { margin-top: 12px; }
.next { display: flex; align-items: center; margin-top: 44px; height: 15px; gap: 3px; }
.dut { width: 100px; height: 15px; padding: 1px 0 0 46px; margin-left: -1px; }
.mode { margin-top: 2px; }
.clock { margin: 10px 0 0 1px; font: 16px/18px "Liberation Sans", sans-serif; letter-spacing: 0; color: #0a4fd6; }

/* taskbar */
.taskbar { height: 28px; flex: none; display: flex; align-items: flex-start; padding-top: 4px; background: #d4d0c8; box-shadow: inset 0 1px #d4d0c8, inset 0 2px #fff; position: relative; }
.startbtn { margin-left: 2px; width: 52px; height: 21px; display: flex; align-items: center; gap: 2px; padding-left: 3px; box-shadow: inset 1px 1px #fff, inset -1px -1px #404040, inset -2px -2px #808080; font-size: 12px; letter-spacing: 0; }
.flag { width: 16px; height: 16px; flex: none; }
.quick { display: flex; align-items: center; gap: 5px; margin-left: 9px; width: 46px; height: 21px; }
.q, .q2 { width: 16px; height: 16px; flex: none; }
.tasks { display: flex; gap: 3px; }
.task { width: 160px; height: 22px; display: flex; align-items: center; gap: 3px; padding-left: 4px; white-space: nowrap; letter-spacing: -.2px; box-shadow: inset 1px 1px #fff, inset -1px -1px #404040, inset -2px -2px #808080; }
.task.cmd { letter-spacing: .25px; }
.tsk-i { width: 16px; height: 16px; flex: none; }
.task.pressed { font-weight: bold; gap: 4px; letter-spacing: .25px; background: repeating-conic-gradient(#fff 0 25%, #d4d0c8 0 50%) 0 0 / 2px 2px; box-shadow: inset 1px 1px #404040, inset 2px 2px #808080, inset -1px -1px #fff; }
.tray { margin-left: auto; margin-right: 2px; width: 131px; height: 21px; display: flex; align-items: center; gap: 2px; padding-left: 5px; box-shadow: inset 1px 1px #808080, inset -1px -1px #fff; }
.chev { font-weight: bold; font-size: 13px; width: 12px; }
.tr { width: 16px; height: 16px; flex: none; }
.time { margin-left: 4px; white-space: nowrap; }
```
